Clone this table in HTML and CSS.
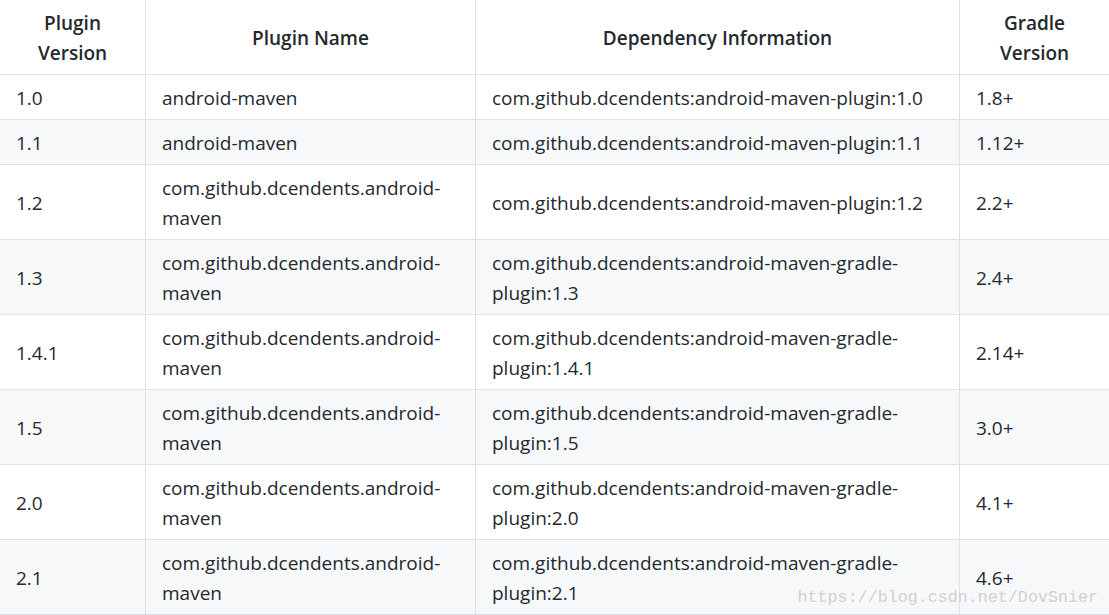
FILE: index.html
```html
<!DOCTYPE html>
<html>
<head>
<meta charset="utf-8">
<link rel="stylesheet" href="styles.css">
</head>
<body>
<div class="page">
<table class="tbl">
  <colgroup>
    <col class="c1"><col class="c2"><col class="c3"><col class="c4">
  </colgroup>
  <thead>
    <tr><th>Plugin Version</th><th>Plugin Name</th><th>Dependency Information</th><th>Gradle Version</th></tr>
  </thead>
  <tbody>
    <tr><td>1.0</td><td>android-maven</td><td>com.github.dcendents:android-maven-plugin:1.0</td><td>1.8+</td></tr>
    <tr><td>1.1</td><td>android-maven</td><td>com.github.dcendents:android-maven-plugin:1.1</td><td>1.12+</td></tr>
    <tr><td>1.2</td><td>com.github.dcendents.android-maven</td><td>com.github.dcendents:android-maven-plugin:1.2</td><td>2.2+</td></tr>
    <tr><td>1.3</td><td>com.github.dcendents.android-maven</td><td>com.github.dcendents:android-maven-gradle-plugin:1.3</td><td>2.4+</td></tr>
    <tr><td>1.4.1</td><td>com.github.dcendents.android-maven</td><td>com.github.dcendents:android-maven-gradle-plugin:1.4.1</td><td>2.14+</td></tr>
    <tr><td>1.5</td><td>com.github.dcendents.android-maven</td><td>com.github.dcendents:android-maven-gradle-plugin:1.5</td><td>3.0+</td></tr>
    <tr><td>2.0</td><td>com.github.dcendents.android-maven</td><td>com.github.dcendents:android-maven-gradle-plugin:2.0</td><td>4.1+</td></tr>
    <tr><td>2.1</td><td>com.github.dcendents.android-maven</td><td>com.github.dcendents:android-maven-gradle-plugin:2.1</td><td>4.6+</td></tr>
  </tbody>
</table>
<div class="watermark">https://blog.csdn.net/DovSnier</div>
</div>
</body>
</html>
```
FILE: styles.css
```css
html, body {
  margin: 0;
  padding: 0;
  background: #ffffff;
  overflow: hidden;
}
.page {
  position: relative;
  width: 1109px;
  height: 615px;
  overflow: hidden;
}
.tbl {
  border-collapse: collapse;
  table-layout: fixed;
  width: 1110px;
  margin: -1px 0 0 -1px;
  font-family: "Open Sans", "Noto Sans", sans-serif;
  font-size: 19px;
  line-height: 30px;
  color: #24292e;
}
.c1 { width: 146px; }
.c2 { width: 330px; }
.c3 { width: 484px; }
.c4 { width: 150px; }
.tbl th, .tbl td {
  border: 1px solid #dfe2e5;
  padding: 8px 16px 6px;
  vertical-align: middle;
}
.tbl th {
  font-weight: 600;
  text-align: center;
}
.tbl td {
  text-align: left;
}
.tbl tbody tr:nth-child(even) {
  background: #f6f8fa;
}
.watermark {
  position: absolute;
  right: 11px;
  bottom: 7px;
  font-family: "Liberation Mono", "DejaVu Sans Mono", monospace;
  font-size: 16.7px;
  line-height: 20px;
  color: #cfcfcf;
  text-shadow: 1px 1px 0 rgba(255,255,255,0.6);
  pointer-events: none;
}
```
